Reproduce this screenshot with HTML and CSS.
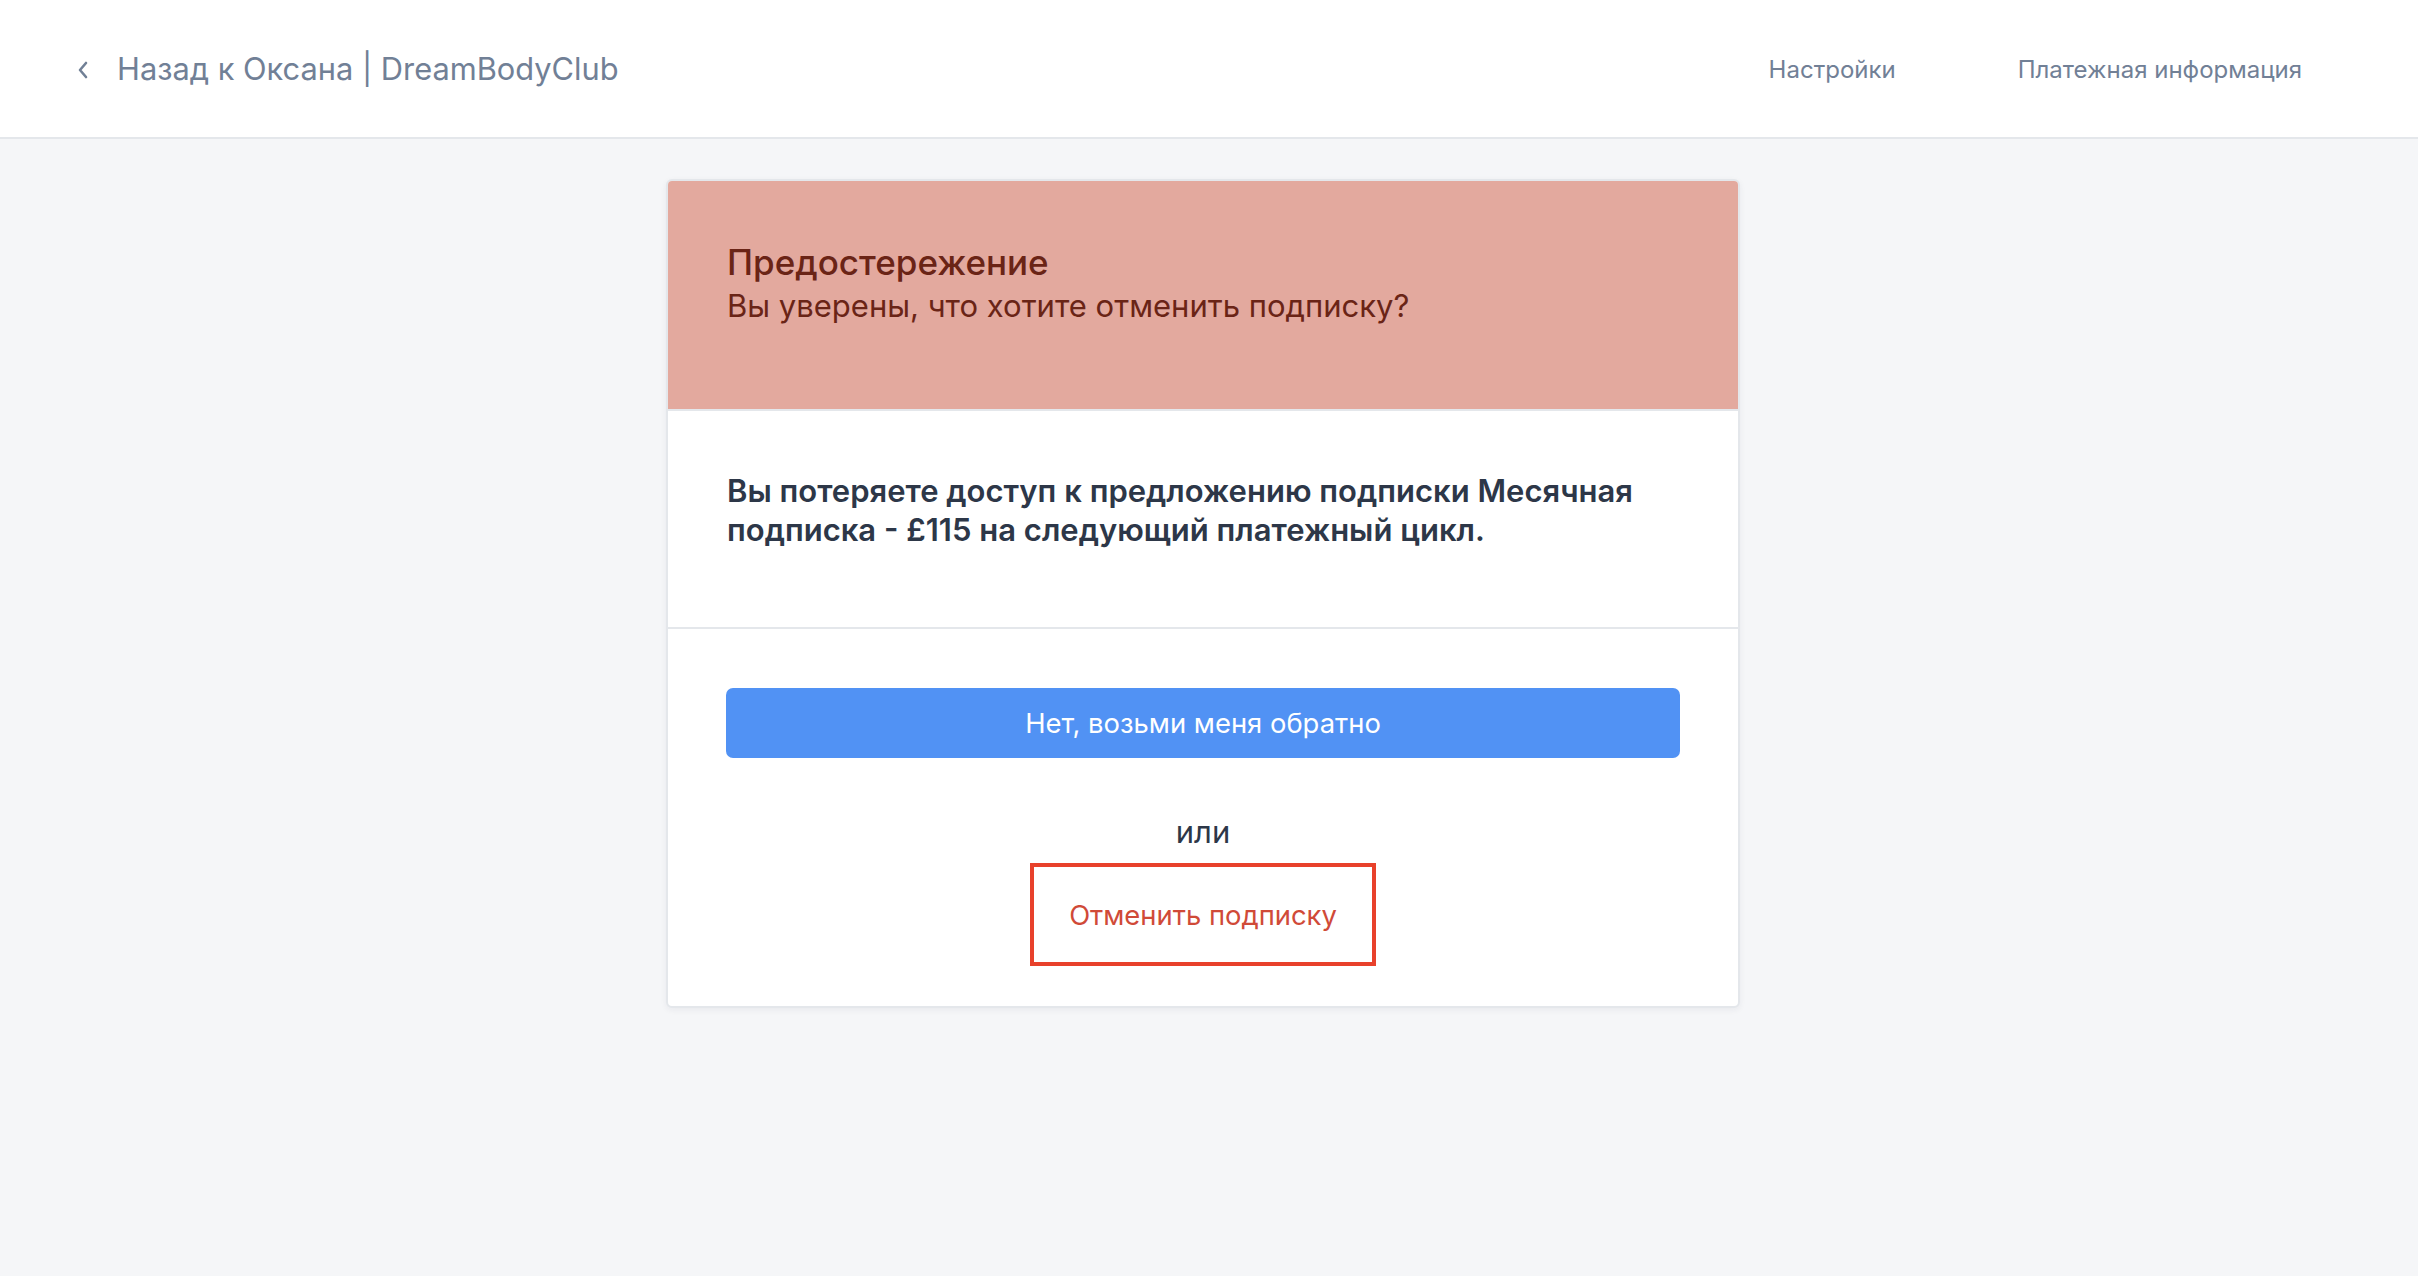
FILE: index.html
```html
<!DOCTYPE html>
<html lang="ru">
<head>
<meta charset="utf-8">
<title>Отменить подписку</title>
<link rel="stylesheet" href="styles.css">
</head>
<body>
<header class="topbar">
  <a class="back" href="#">
    <svg class="chev" width="12" height="18" viewBox="0 0 12 18" aria-hidden="true"><path d="M9 2 L3 9 L9 16" fill="none" stroke="currentColor" stroke-width="2.6" stroke-linecap="round" stroke-linejoin="round"/></svg>
    <span class="back-text">Назад к Оксана | DreamBodyClub</span>
  </a>
  <nav class="nav">
    <a href="#">Настройки</a>
    <a href="#">Платежная информация</a>
  </nav>
</header>
<main class="page">
  <section class="card">
    <div class="card-head">
      <h1 class="warn-title">Предостережение</h1>
      <p class="warn-sub">Вы уверены, что хотите отменить подписку?</p>
    </div>
    <div class="card-body">
      <p class="lose">Вы потеряете доступ к предложению подписки Месячная подписка - £115 на следующий платежный цикл.</p>
    </div>
    <div class="card-foot">
      <button class="btn-keep">Нет, возьми меня обратно</button>
      <div class="or">или</div>
      <button class="btn-cancel">Отменить подписку</button>
    </div>
  </section>
</main>
</body>
</html>
```
FILE: styles.css
```css
* { box-sizing: border-box; }
html, body { margin: 0; padding: 0; }
body {
  font-family: Inter, Roboto, "Noto Sans", "Liberation Sans", sans-serif;
  background: #f5f6f8;
  color: #2d3748;
  min-height: 1276px;
}
a { text-decoration: none; color: inherit; }

.topbar {
  height: 139px;
  background: #ffffff;
  border-bottom: 2px solid #e4e7eb;
  display: flex;
  align-items: center;
  justify-content: space-between;
  padding: 0 116px 0 77px;
}
.back {
  display: flex;
  align-items: center;
  color: #718096;
}
.chev { width: 12px; height: 18px; margin-right: 28px; margin-top: 2px; }
.back-text { font-size: 30.8px; }
.nav { display: flex; gap: 122px; margin-top: 2px; }
.nav a { font-size: 24px; color: #718096; }

.page {
  display: flex;
  justify-content: center;
  padding: 40px 12px 0 0;
}
.card {
  width: 1074px;
  background: #ffffff;
  border: 2px solid #e4e7eb;
  border-radius: 6px;
  box-shadow: 0 2px 6px rgba(30, 40, 60, 0.06);
  overflow: hidden;
}
.card-head {
  background: #e3a99e;
  padding: 58px 59px 82px;
  border-bottom: 2px solid #e4e7eb;
  color: #6a2416;
}
.warn-title {
  margin: 0;
  font-size: 35px;
  font-weight: 500;
  line-height: 46px;
}
.warn-sub {
  margin: 0;
  font-size: 31px;
  line-height: 42px;
}
.card-body {
  padding: 60px 59px 78px;
  border-bottom: 2px solid #e4e7eb;
}
.lose {
  margin: 0;
  font-size: 31px;
  font-weight: 600;
  line-height: 39px;
  color: #2d3748;
}
.card-foot {
  padding: 59px 58px 40px;
  display: flex;
  flex-direction: column;
  align-items: center;
}
.btn-keep {
  width: 100%;
  height: 70px;
  border: none;
  border-radius: 7px;
  background: #5192f4;
  color: #ffffff;
  font-family: inherit;
  font-size: 27.4px;
}
.or {
  margin-top: 54px;
  font-size: 31px;
  line-height: 40px;
  color: #2d3748;
}
.btn-cancel {
  margin-top: 11px;
  width: 346px;
  height: 103px;
  border: 4px solid #e8412b;
  background: #ffffff;
  color: #d04a38;
  font-family: inherit;
  font-size: 27.4px;
}
```
